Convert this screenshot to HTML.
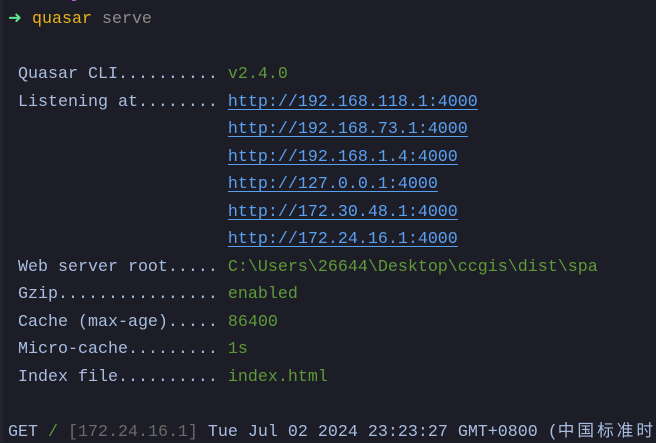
<!DOCTYPE html>
<html><head><meta charset="utf-8"><style>
html,body{margin:0;padding:0;}
body{width:656px;height:442px;background:#1d1d27;position:relative;overflow:hidden;font-family:"Liberation Mono","Noto Sans CJK SC",monospace;font-size:16.67px;}
.strip{position:absolute;left:0;top:0;width:3px;height:442px;background:#24242f;}
.l{position:absolute;left:8px;white-space:pre;line-height:20px;margin-top:2px;}
.lab{color:#a8bde0;}
.v{color:#5f9a38;}
a{color:#5aa0f0;text-decoration:underline;text-underline-offset:3px;}
.g{color:#5fe68c;}.y{color:#e8b417;}.s{color:#8a8a8a;}
.dim{color:#6b6b6b;}.gs{color:#5f9a38;}.w{color:#a8bde0;}
.cjk{letter-spacing:3px;}
.pk{position:absolute;left:72px;top:-3px;width:4px;height:4px;background:#b35ad9;}
</style></head><body>
<div class="strip"></div>
<div class="pk"></div>
<div class="l" style="top:8px"><span class="g">➜</span> <span class="y">quasar</span> <span class="s">serve</span></div>
<div class="l" style="top:63px"><span class="lab"> Quasar CLI.......... </span><span class="v">v2.4.0</span></div>
<div class="l" style="top:91px"><span class="lab"> Listening at........ </span><a>http://192.168.118.1:4000</a></div>
<div class="l" style="top:118px"><span class="lab">                      </span><a>http://192.168.73.1:4000</a></div>
<div class="l" style="top:146px"><span class="lab">                      </span><a>http://192.168.1.4:4000</a></div>
<div class="l" style="top:173px"><span class="lab">                      </span><a>http://127.0.0.1:4000</a></div>
<div class="l" style="top:201px"><span class="lab">                      </span><a>http://172.30.48.1:4000</a></div>
<div class="l" style="top:228px"><span class="lab">                      </span><a>http://172.24.16.1:4000</a></div>
<div class="l" style="top:256px"><span class="lab"> Web server root..... </span><span class="v">C:\Users\26644\Desktop\ccgis\dist\spa</span></div>
<div class="l" style="top:283px"><span class="lab"> Gzip................ </span><span class="v">enabled</span></div>
<div class="l" style="top:311px"><span class="lab"> Cache (max-age)..... </span><span class="v">86400</span></div>
<div class="l" style="top:338px"><span class="lab"> Micro-cache......... </span><span class="v">1s</span></div>
<div class="l" style="top:366px"><span class="lab"> Index file.......... </span><span class="v">index.html</span></div>
<div class="l" style="top:421px"><span class="w">GET </span><span class="gs">/</span> <span class="dim">[172.24.16.1]</span><span class="w"> Tue Jul 02 2024 23:23:27 GMT+0800 (<span class="cjk">中国标准时间</span>)</span></div>
</body></html>
